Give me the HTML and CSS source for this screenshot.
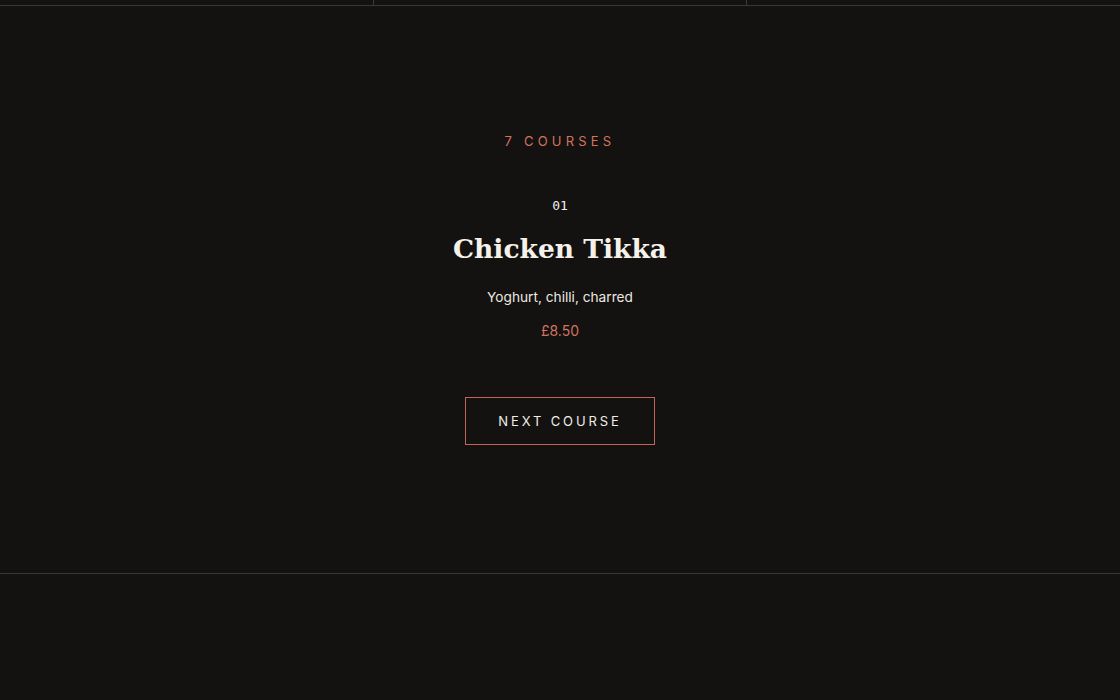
FILE: index.html
```html
<!DOCTYPE html>
<html lang="en">
<head>
<meta charset="utf-8">
<title>Tasting Menu</title>
<link rel="stylesheet" href="styles.css">
</head>
<body>
  <div class="top-grid">
    <div class="cell"></div>
    <div class="cell"></div>
    <div class="cell"></div>
  </div>
  <section class="course">
    <p class="eyebrow">7 COURSES</p>
    <p class="num">01</p>
    <h1 class="title">Chicken Tikka</h1>
    <p class="desc">Yoghurt, chilli, charred</p>
    <p class="price">£8.50</p>
    <button class="next">NEXT COURSE</button>
  </section>
  <div class="after"></div>
</body>
</html>
```
FILE: styles.css
```css
* { box-sizing: border-box; }
html, body { margin: 0; padding: 0; }
body {
  background: #131211;
  color: #f1ede6;
  font-family: Inter, "Liberation Sans", sans-serif;
  height: 700px;
  overflow: hidden;
}
.top-grid {
  display: grid;
  grid-template-columns: 374px 373px 1fr;
  height: 6px;
  border-bottom: 1px solid #3a3835;
}
.cell { border-right: 1px solid #3a3835; }
.cell:last-child { border-right: none; }
.course {
  height: 568px;
  border-bottom: 1px solid #3a3835;
  display: flex;
  flex-direction: column;
  align-items: center;
  padding-top: 127px;
}
.course p { margin: 0; }
.eyebrow {
  font-size: 13px;
  letter-spacing: 4.2px;
  color: #d4735f;
  line-height: 16px;
}
.num {
  margin-top: 50px !important;
  font-family: "DejaVu Sans Mono", monospace;
  font-size: 13px;
  line-height: 14px;
  color: #f1ede6;
}
.title {
  margin: 18px 0 0;
  font-family: "DejaVu Serif", "Liberation Serif", serif;
  font-weight: 700;
  font-size: 26.5px;
  line-height: 36px;
  color: #f6f2ea;
}
.desc {
  margin-top: 20px !important;
  font-size: 13.7px;
  line-height: 20px;
  color: #ece8e0;
}
.price {
  margin-top: 14px !important;
  font-size: 14px;
  line-height: 20px;
  color: #d4735f;
}
.next {
  margin-top: 56px;
  width: 190px;
  height: 48px;
  background: transparent;
  border: 1px solid #c4625a;
  color: #f1ede6;
  font-family: Inter, "Liberation Sans", sans-serif;
  font-size: 13px;
  letter-spacing: 2.9px;
  padding: 0;
}
```
